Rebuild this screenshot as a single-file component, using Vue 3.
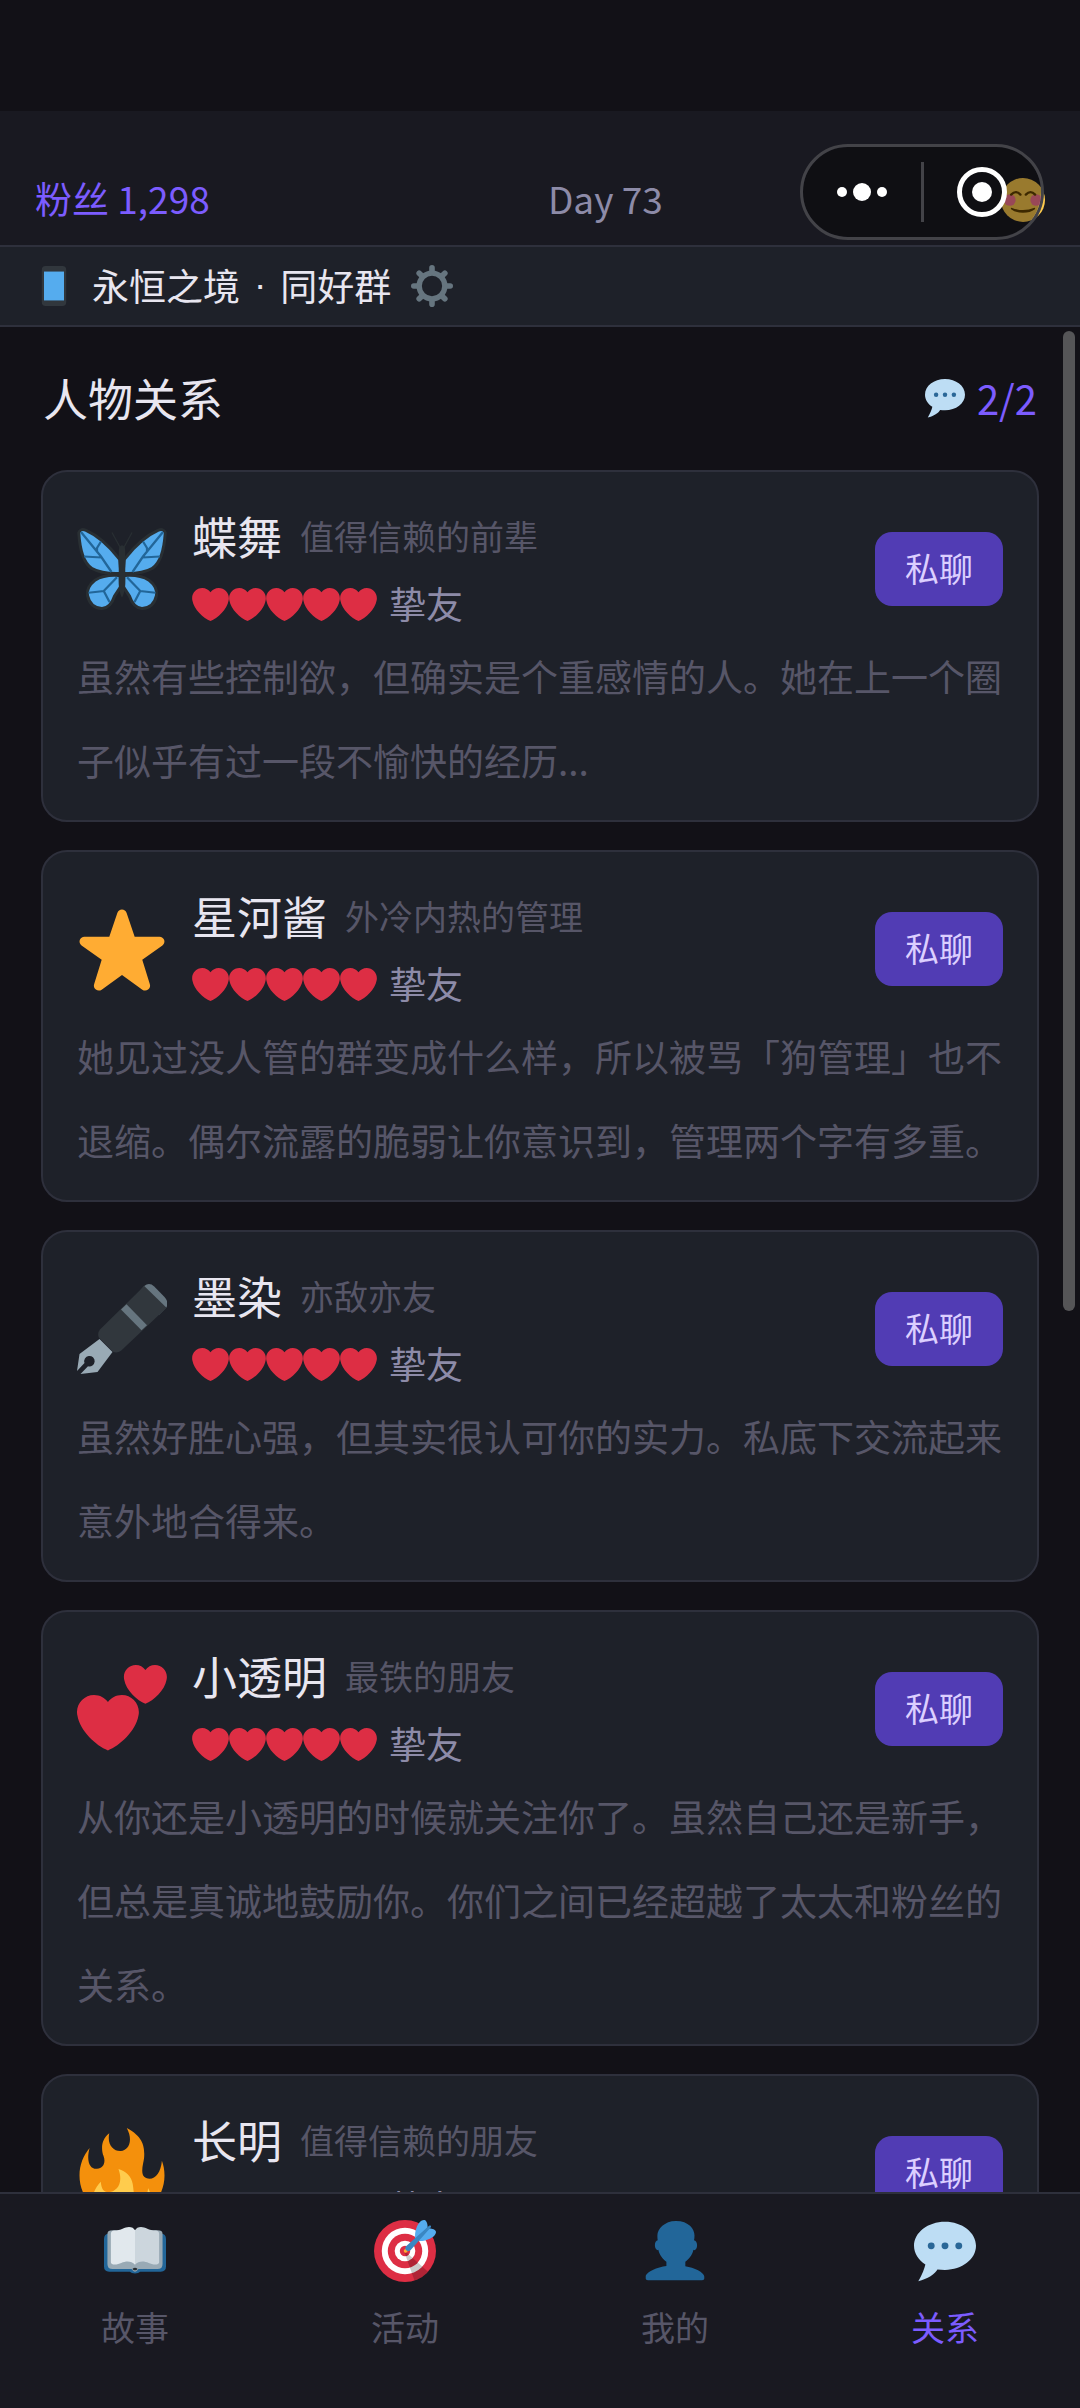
<script setup>
const friends = [
  { name: '蝶舞', icon: 'butterfly', role: '值得信赖的前辈', desc: '虽然有些控制欲，但确实是个重感情的人。她在上一个圈子似乎有过一段不愉快的经历...' },
  { name: '星河酱', icon: 'star', role: '外冷内热的管理', desc: '她见过没人管的群变成什么样，所以被骂「狗管理」也不退缩。偶尔流露的脆弱让你意识到，管理两个字有多重。' },
  { name: '墨染', icon: 'pen', role: '亦敌亦友', desc: '虽然好胜心强，但其实很认可你的实力。私底下交流起来意外地合得来。' },
  { name: '小透明', icon: 'hearts', role: '最铁的朋友', desc: '从你还是小透明的时候就关注你了。虽然自己还是新手，但总是真诚地鼓励你。你们之间已经超越了太太和粉丝的关系。' },
  { name: '长明', icon: 'fire', role: '值得信赖的朋友', desc: '' }
]
const tabs = [
  { label: '故事', icon: 'book' },
  { label: '活动', icon: 'target' },
  { label: '我的', icon: 'person' },
  { label: '关系', icon: 'bubble', active: true }
]
</script>

<template>
  <svg class="sprite" aria-hidden="true">
    <symbol id="heart" viewBox="0 0 36 36">
      <path fill="#DD2E44" d="M35.885 11.833c0-5.45-4.418-9.868-9.867-9.868-3.308 0-6.227 1.633-8.018 4.129-1.791-2.496-4.71-4.129-8.017-4.129-5.45 0-9.868 4.417-9.868 9.868 0 .772.098 1.52.266 2.241C1.751 22.587 11.216 31.568 18 34.034c6.783-2.466 16.249-11.447 17.617-19.959.17-.721.268-1.469.268-2.242z" />
    </symbol>
    <symbol id="hearts" viewBox="0 0 36 36">
      <g fill="#DD2E44">
        <path transform="translate(-.08 11) scale(.692)" d="M35.885 11.833c0-5.45-4.418-9.868-9.867-9.868-3.308 0-6.227 1.633-8.018 4.129-1.791-2.496-4.71-4.129-8.017-4.129-5.45 0-9.868 4.417-9.868 9.868 0 .772.098 1.52.266 2.241C1.751 22.587 11.216 31.568 18 34.034c6.783-2.466 16.249-11.447 17.617-19.959.17-.721.268-1.469.268-2.242z" />
        <path transform="translate(18.7 -.5) scale(.481)" d="M35.885 11.833c0-5.45-4.418-9.868-9.867-9.868-3.308 0-6.227 1.633-8.018 4.129-1.791-2.496-4.71-4.129-8.017-4.129-5.45 0-9.868 4.417-9.868 9.868 0 .772.098 1.52.266 2.241C1.751 22.587 11.216 31.568 18 34.034c6.783-2.466 16.249-11.447 17.617-19.959.17-.721.268-1.469.268-2.242z" />
      </g>
    </symbol>
    <symbol id="star" viewBox="0 0 36 36">
      <path fill="#FFAC33" d="M27.287 34.627c-.404 0-.806-.124-1.152-.371L18 28.422l-8.135 5.834c-.343.247-.745.371-1.148.371-.409 0-.817-.127-1.164-.378-.683-.5-.968-1.375-.71-2.179l3.034-9.792-8.062-5.681c-.685-.505-.97-1.383-.708-2.19.264-.805 1.016-1.353 1.866-1.353l9.947-.004 3.213-9.475c.265-.8 1.014-1.338 1.857-1.338.849 0 1.597.54 1.861 1.338l3.213 9.475 9.949.004c.849 0 1.6.547 1.864 1.353.264.808-.02 1.686-.707 2.19l-8.062 5.68 3.033 9.793c.26.803-.026 1.679-.707 2.178-.348.251-.757.379-1.164.379z" />
    </symbol>
    <symbol id="bubble" viewBox="0 0 36 36">
      <path fill="#BDDDF4" d="M18 1C8.059 1 0 7.268 0 15c0 4.368 2.574 8.268 6.604 10.835C6.08 28.144 4.859 31.569 2.5 35.5c5.258-.96 9.939-4.305 11.1-6.7C15.017 28.925 16.485 29 18 29c9.941 0 18-6.268 18-14S27.941 1 18 1z" />
      <g fill="#2A6797"><circle cx="10" cy="15" r="2" /><circle cx="18" cy="15" r="2" /><circle cx="26" cy="15" r="2" /></g>
    </symbol>
    <symbol id="fire" viewBox="0 0 36 36">
      <path fill="#F4900C" d="M35 19c0-2.062-.367-4.039-1.04-5.868-.46 5.389-3.333 8.157-6.335 6.868-2.812-1.208-.917-5.917-.777-8.164.236-3.809-.012-8.169-6.931-11.794 2.875 5.5.333 8.917-2.333 9.125-2.958.231-5.667-2.542-4.667-7.042-3.238 2.386-3.332 6.402-2.333 9 1.042 2.708-.042 4.958-2.583 5.208-2.84.28-4.418-3.041-2.963-8.333C2.52 10.965 1 14.805 1 19c0 9.389 7.611 17 17 17s17-7.611 17-17z" />
      <path fill="#FFCC4D" d="M28.394 23.999c.148 3.084-2.561 4.293-4.019 3.709-2.106-.843-1.541-2.291-2.083-5.291s-2.625-5.083-5.708-6c2.25 6.333-1.247 8.667-3.08 9.084-1.872.426-3.753-.001-3.968-4.007C7.352 23.668 6 26.676 6 30c0 .368.023.73.055 1.09C9.125 34.124 13.342 36 18 36s8.875-1.876 11.945-4.91c.032-.36.055-.722.055-1.09 0-2.187-.584-4.236-1.606-6.001z" />
    </symbol>
    <symbol id="person" viewBox="0 0 36 36">
      <path fill="#226699" d="M24 26.799v-2.566c2-1.348 4.08-3.779 4.703-6.896.186.103.206.17.413.17.991 0 1.709-1.287 1.709-2.873 0-1.562-.823-2.827-1.794-2.865.187-.674.293-1.577.293-2.735C29.324 5.168 26 .527 18.541.527c-6.629 0-10.777 4.641-10.777 8.507 0 1.123.069 2.043.188 2.755-.911.137-1.629 1.352-1.629 2.845 0 1.587.804 2.873 1.796 2.873.206 0 .025-.067.209-.17C8.952 20.453 11 22.885 13 24.232v2.414c-5 .645-12 3.437-12 6.23v1.061C1 35 2.076 35 3.137 35h29.725C33.924 35 35 35 35 33.938v-1.061c0-2.615-6-5.225-11-6.078z" />
    </symbol>
    <symbol id="target" viewBox="0 0 36 36">
      <circle cx="18" cy="18" r="18" fill="#DD2E44" />
      <circle cx="18" cy="18" r="13.5" fill="#fff" />
      <circle cx="18" cy="18" r="10" fill="#DD2E44" />
      <circle cx="18" cy="18" r="6" fill="#fff" />
      <circle cx="18" cy="18" r="3" fill="#DD2E44" />
      <path opacity=".2" d="M18.24 18.282l13.144 11.754s-2.647 3.376-7.89 5.109L17.579 18.42l.661-.138z" />
      <path fill="#FFAC33" d="M18.294 19c-.255 0-.509-.097-.704-.292-.389-.389-.389-1.018 0-1.407l.563-.563c.389-.389 1.018-.389 1.408 0 .388.389.388 1.018 0 1.407l-.564.563c-.194.195-.448.292-.703.292z" />
      <path fill="#55ACEE" d="M24.016 6.981c-.403 2.079 0 4.691 0 4.691l7.054-7.388c.291-1.454-.528-3.932-1.718-4.238-1.19-.306-4.079.803-5.336 6.935zm5.003 5.003c-2.079.403-4.691 0-4.691 0l7.388-7.054c1.454-.291 3.932.528 4.238 1.718.306 1.19-.803 4.079-6.935 5.336z" />
      <path fill="#3A87C2" d="M32.798 4.485L21.176 17.587c-.362.362-1.673.882-2.51.046-.836-.836-.419-2.08-.057-2.443L31.815 3.501s.676-.635 1.159-.152-.176 1.136-.176 1.136z" />
    </symbol>
    <symbol id="book" viewBox="0 0 36 36">
      <path fill="#226699" d="M0 11q0-3 3-3h30q3 0 3 3v16q0 3-3 3H21q-1 1-3 1t-3-1H3q-3 0-3-3z" />
      <path fill="#99AAB5" d="M2 8q0-2 3-2h26q3 0 3 2v17.500q0 3-3 3H20q-1 1.500-2 1.500t-2-1.500H5q-3 0-3-3z" />
      <path fill="#292F33" d="M16.500 28.500q1.500-1.500 3 0l-.8.700h-1.400z" />
      <path fill="#E1E8ED" d="M4 8q0-1.800 2-1.900C10 6 12 4 14.500 4Q17 4 18 6v20c-2-2.200-5-2.400-8-1-2 1-6 1.500-6-.5z" />
      <path fill="#CCD6DD" d="M32 8q0-1.800-2-1.900C26 6 24 4 21.500 4Q19 4 18 6v20c2-2.200 5-2.400 8-1 2 1 6 1.500 6-.5z" />
    </symbol>
    <symbol id="phone" viewBox="0 0 36 36">
      <rect x="7" width="22" height="36" rx="3.500" fill="#31373D" />
      <path fill="#55ACEE" d="M9 5h18v26H9z" />
    </symbol>
    <symbol id="gear" viewBox="0 0 36 36">
      <circle cx="18" cy="18" r="11" fill="none" stroke="#66757F" stroke-width="4.600" />
      <g stroke="#66757F" stroke-width="4.800" stroke-linecap="round">
        <path d="M18 2.400V6M18 30v3.600M2.400 18H6M30 18h3.600M7 7l2.500 2.500M26.500 26.500L29 29M29 7l-2.500 2.500M9.500 26.500L7 29" />
      </g>
    </symbol>
    <symbol id="smile" viewBox="0 0 36 36">
      <circle cx="18" cy="18" r="18" fill="#FFCC4D" />
      <g fill="#FF7892"><circle cx="7.200" cy="18" r="4.800" /><circle cx="28.800" cy="18" r="4.800" /></g>
      <g fill="none" stroke="#664500" stroke-width="1.900" stroke-linecap="round">
        <path d="M8.300 13.600q3.900-4.200 7.600 0M20.300 13.600q3.900-4.200 7.600 0" />
      </g>
      <path fill="#664500" d="M8.600 24.300q9.400 3.800 18.800 0 .9.400.3 1.300Q24 28.500 18 28.500t-9.700-2.900q-.6-.9.300-1.300z" />
    </symbol>
    <symbol id="butterfly" viewBox="0 0 36 36">
      <g id="wing">
        <g fill="#55ACEE" stroke="#292F33" stroke-width="2.400" paint-order="stroke">
          <path d="M1.300 3.600Q1.600 2.500 3.200 3 10 6 16.500 14.400L16.900 19.200Q10 19.400 6.300 17.300 2 14.500 1.300 3.600z" />
          <path d="M16.700 21.200Q11 20.800 7.500 23 4.300 25.500 4.800 28.500 5.800 33 10 33.200 13 33 14.500 28.500L16.800 25z" />
        </g>
        <path fill="none" stroke="#226699" stroke-width=".9" d="M1.600 3.200L9.600 13l4.200 6.200M9.600 7L8 9.600v1.200M2.800 13l7 .4M16 21.300l-5.300 5.500-6.100.7M10.700 26.800l2.300 4.400" />
        <path fill="none" stroke="#292F33" stroke-width=".5" d="M14 3.400l3.700 6.800" />
      </g>
      <use href="#wing" transform="matrix(-1 0 0 1 36 0)" />
      <path fill="#292F33" d="M18 8.500q1.300 0 1.300 2.500v13q0 3-1.300 5.500-1.300-2.500-1.300-5.500V11q0-2.500 1.300-2.500z" />
    </symbol>
    <symbol id="pen" viewBox="0 0 36 36">
      <path fill="#66757F" d="M26.900.8q2-1.600 4 .2l4.100 4.200q1.800 2 .8 4.100l-3 3-9-8z" />
      <path fill="#31373D" d="M26.900.8l8.900 8.700-18.200 17.200q-1.600 1.100-3.200.4l-5.600-5.600q-.8-1.700.4-3.300z" />
      <path fill="#66757F" d="M17.600 10.200l2.200-2.100 8.200 8.400-2.200 2z" />
      <path fill="#99AAB5" d="M9 22l5.200 5.200-6 8-6.800.8 3-3.100a2.100 2.100 0 1 0-1.400-1.300L0 34.800 1 28z" />
    </symbol>
  </svg>

  <div class="app">
    <header class="top">
      <span class="fans">粉丝 1,298</span>
      <span class="day">Day 73</span>
      <svg class="mood"><use href="#smile" /></svg>
      <div class="capsule">
        <button type="button" aria-label="更多">
          <svg class="more" viewBox="0 0 50 18" fill="#fff"><circle cx="5" cy="9" r="5" /><circle cx="25" cy="9" r="9" /><circle cx="45" cy="9" r="5" /></svg>
        </button>
        <i class="split"></i>
        <button type="button" aria-label="关闭">
          <svg class="close" viewBox="0 0 50 50"><circle cx="25" cy="25" r="22.500" fill="none" stroke="#fff" stroke-width="5" /><circle cx="25" cy="25" r="10" fill="#fff" /></svg>
        </button>
      </div>
    </header>

    <div class="group">
      <svg class="phone"><use href="#phone" /></svg>
      <span class="crumb"><span>永恒之境</span><span class="dot">·</span><span>同好群</span></span>
      <button type="button" class="settings" aria-label="设置"><svg><use href="#gear" /></svg></button>
    </div>

    <main class="content">
      <div class="title">
        <h1>人物关系</h1>
        <span class="count"><svg><use href="#bubble" /></svg>2/2</span>
      </div>
      <article v-for="f in friends" :key="f.name" class="card">
        <div class="head">
          <svg class="avatar"><use :href="'#' + f.icon" /></svg>
          <div class="info">
            <div class="who"><h2>{{ f.name }}</h2><span class="role">{{ f.role }}</span></div>
            <div class="level"><span class="love"><svg v-for="n in 5" :key="n"><use href="#heart" /></svg></span>挚友</div>
          </div>
          <button type="button" class="chat">私聊</button>
        </div>
        <p>{{ f.desc }}</p>
      </article>
      <div class="thumb"></div>
    </main>

    <nav class="tabs">
      <a v-for="t in tabs" :key="t.label" href="#" :class="{ active: t.active }">
        <svg><use :href="'#' + t.icon" /></svg>
        <span>{{ t.label }}</span>
      </a>
    </nav>
  </div>
</template>

<style>
body {
  margin: 0;
  background: #121117;
}
</style>

<style scoped>
* {
  box-sizing: border-box;
}
svg {
  display: block;
  flex: none;
}
.sprite {
  position: absolute;
  width: 0;
  height: 0;
}
button {
  margin: 0;
  padding: 0;
  border: 0;
  background: none;
  font: inherit;
}
h1,
h2,
p {
  margin: 0;
  font-weight: 400;
}
.app {
  display: flex;
  flex-direction: column;
  height: 100vh;
  padding-top: 111px;
  overflow: hidden;
  background: #121117;
  color: #e8e6f0;
  font-family: "Noto Sans CJK SC", sans-serif;
  font-size: 37px;
}
.top {
  position: relative;
  display: flex;
  flex: none;
  align-items: center;
  justify-content: space-between;
  height: 136px;
  padding: 44px 35px 0;
  border-bottom: 2px solid #2e303c;
  background: #191921;
}
.fans,
.day {
  padding-bottom: 5px;
}
.fans {
  color: #7c5cff;
}
.day {
  color: #8d8ba8;
}
.mood {
  width: 44px;
  height: 44px;
}
.capsule {
  position: absolute;
  top: 33px;
  right: 36px;
  display: flex;
  align-items: center;
  width: 244px;
  height: 96px;
  border: 3px solid #434348;
  border-radius: 48px;
  background: rgba(0, 0, 0, 0.4);
  background-clip: padding-box;
}
.capsule button {
  display: flex;
  flex: 1;
  justify-content: center;
}
.split {
  width: 3px;
  height: 60px;
  background: #434348;
}
.more {
  width: 50px;
  height: 18px;
}
.close {
  width: 50px;
  height: 50px;
}
.group {
  display: flex;
  flex: none;
  align-items: center;
  height: 80px;
  padding: 0 34px;
  border-bottom: 2px solid #2e303c;
  background: #1e2129;
}
.phone {
  width: 40px;
  height: 40px;
  margin-right: 18px;
}
.crumb {
  display: flex;
  gap: 14px;
  line-height: 74px;
  padding-bottom: 2px;
}
.dot {
  font-family: "Liberation Sans", sans-serif;
}
.settings {
  margin-left: 20px;
}
.settings svg {
  width: 42px;
  height: 42px;
}
.content {
  position: relative;
  display: flex;
  flex: 1;
  flex-direction: column;
  gap: 28px;
  min-height: 0;
  padding: 28px 41px 0;
  overflow: hidden;
}
.title {
  display: flex;
  flex: none;
  align-items: center;
  justify-content: space-between;
  height: 87px;
  padding: 0 2px 2px;
}
.title h1 {
  font-size: 45px;
  line-height: 84px;
}
.count {
  display: flex;
  align-items: center;
  gap: 12px;
  color: #7c5cff;
  font-size: 40px;
}
.count svg {
  width: 40px;
  height: 40px;
}
.card {
  flex: none;
  padding: 34px 34px 18px;
  border: 2px solid #2e303c;
  border-radius: 26px;
  background: #1e2129;
}
.head {
  display: flex;
  align-items: center;
  height: 126px;
  margin-bottom: 2px;
}
.avatar {
  width: 90px;
  height: 90px;
  margin-right: 25px;
}
.info {
  flex: 1;
}
.who {
  display: flex;
  align-items: center;
  gap: 18px;
  height: 67px;
}
.who h2 {
  font-size: 45px;
}
.role {
  color: #575668;
  font-size: 34px;
}
.level {
  display: flex;
  align-items: center;
  gap: 12px;
  height: 67px;
  color: #8d8ba8;
}
.love {
  display: flex;
  padding-top: 4px;
}
.love svg {
  width: 37px;
  height: 37px;
}
.chat {
  width: 128px;
  height: 74px;
  padding-bottom: 4px;
  border-radius: 17px;
  background: #513cb4;
  color: #dccfff;
  font-size: 34px;
}
.card p {
  color: #575668;
  line-height: 84px;
}
.thumb {
  position: absolute;
  top: 4px;
  right: 5px;
  width: 12px;
  height: 980px;
  border-radius: 6px;
  background: #555557;
}
.tabs {
  display: flex;
  flex: none;
  height: 216px;
  border-top: 2px solid #2e303c;
  background: #191921;
}
.tabs a {
  display: flex;
  flex: 1;
  flex-direction: column;
  align-items: center;
  gap: 20px;
  padding-top: 26px;
  color: #575668;
  font-size: 34px;
  text-decoration: none;
}
.tabs a.active {
  color: #7c5cff;
}
.tabs svg {
  width: 62px;
  height: 62px;
}
</style>
